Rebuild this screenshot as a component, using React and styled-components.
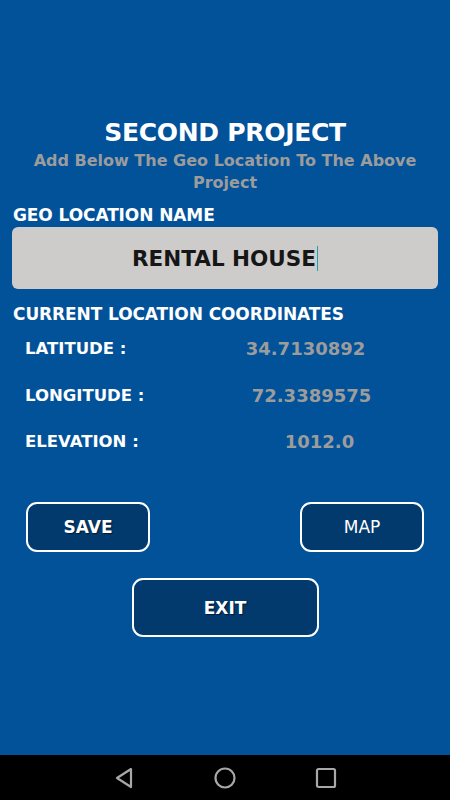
import React from "react";
import styled, { createGlobalStyle } from "styled-components";

const GlobalStyle = createGlobalStyle`
  html, body {
    margin: 0;
    padding: 0;
    background: #02529a;
  }
  body {
    font-family: "DejaVu Sans", "Liberation Sans", sans-serif;
  }
`;

const coords = [
  { label: "LATITUDE :", value: "34.7130892", shift: -21 },
  { label: "LONGITUDE :", value: "72.3389575", shift: -15 },
  { label: "ELEVATION :", value: "1012.0", shift: -7 },
];

const App = () => {
  return (
    <Screen>
      <GlobalStyle />
      <Content>
        <Title>SECOND PROJECT</Title>
        <Subtitle>Add Below The Geo Location To The Above Project</Subtitle>

        <SectionLabel top={11}>GEO LOCATION NAME</SectionLabel>
        <NameBox>
          <NameText>RENTAL HOUSE</NameText>
          <Caret />
        </NameBox>

        <SectionLabel top={15}>CURRENT LOCATION COORDINATES</SectionLabel>
        <CoordList>
          {coords.map((c) => (
            <CoordRow key={c.label}>
              <CoordLabel>{c.label}</CoordLabel>
              <CoordValue shift={c.shift}>{c.value}</CoordValue>
            </CoordRow>
          ))}
        </CoordList>

        <ButtonRow>
          <ActionButton>SAVE</ActionButton>
          <ActionButton light>MAP</ActionButton>
        </ButtonRow>
        <ExitWrap>
          <ExitButton>EXIT</ExitButton>
        </ExitWrap>
      </Content>

      <NavBar>
        <svg width="22" height="24" viewBox="0 0 22 24">
          <path d="M18 3 L4 12 L18 21 Z" fill="none" stroke="#a8a8a8" strokeWidth="2.2" strokeLinejoin="round" />
        </svg>
        <svg width="24" height="24" viewBox="0 0 24 24">
          <circle cx="12" cy="12" r="9.5" fill="none" stroke="#a8a8a8" strokeWidth="2.2" />
        </svg>
        <svg width="22" height="22" viewBox="0 0 22 22">
          <rect x="2" y="2" width="18" height="18" rx="1.5" fill="none" stroke="#a8a8a8" strokeWidth="2.2" />
        </svg>
      </NavBar>
    </Screen>
  );
};

export default App;

const Screen = styled.div`
  width: 450px;
  height: 800px;
  display: flex;
  flex-direction: column;
  background: #02529a;
  overflow: hidden;
`;

const Content = styled.div`
  flex: 1;
  display: flex;
  flex-direction: column;
  padding: 116px 12px 0;
`;

const Title = styled.div`
  color: #fff;
  font-weight: bold;
  font-size: 25px;
  letter-spacing: -0.3px;
  text-align: center;
  line-height: 34px;
`;

const Subtitle = styled.div`
  color: #9c9c9c;
  font-weight: bold;
  font-size: 16px;
  line-height: 22px;
  text-align: center;
  padding: 0 20px;
`;

const SectionLabel = styled.div`
  color: #fff;
  font-weight: bold;
  font-size: 17px;
  letter-spacing: -0.1px;
  line-height: 20px;
  margin-top: ${({ top }) => top}px;
  padding-left: 1px;
`;

const NameBox = styled.div`
  height: 62px;
  margin-top: 2px;
  background: #cdcccb;
  border-radius: 6px;
  display: flex;
  align-items: center;
  justify-content: center;
`;

const NameText = styled.span`
  color: #161616;
  font-weight: bold;
  font-size: 21.5px;
`;

const Caret = styled.span`
  width: 1px;
  height: 25px;
  background: #1aa3b5;
  margin-left: 1px;
`;

const CoordList = styled.div`
  display: flex;
  flex-direction: column;
  gap: 26.5px;
  margin-top: 15px;
`;

const CoordRow = styled.div`
  display: grid;
  grid-template-columns: 190px 1fr;
  align-items: center;
  padding-left: 13px;
  line-height: 20px;
`;

const CoordLabel = styled.div`
  color: #fff;
  font-weight: bold;
  font-size: 16.5px;
`;

const CoordValue = styled.div`
  color: #9c9c9c;
  font-weight: bold;
  font-size: 18px;
  text-align: center;
  transform: translateX(${({ shift }) => shift}px);
`;

const ButtonRow = styled.div`
  display: flex;
  justify-content: space-between;
  padding: 0 14px;
  margin-top: 50px;
`;

const ActionButton = styled.div`
  width: 124px;
  height: 50px;
  box-sizing: border-box;
  border: 2px solid #fff;
  border-radius: 11px;
  background: #033a6d;
  color: #fff;
  font-weight: ${({ light }) => (light ? "normal" : "bold")};
  font-size: 17px;
  text-shadow: ${({ light }) => (light ? "none" : "1px 1px 1px #001a33")};
  display: flex;
  align-items: center;
  justify-content: center;
`;

const ExitWrap = styled.div`
  display: flex;
  justify-content: center;
  margin-top: 26px;
`;

const ExitButton = styled(ActionButton)`
  width: 187px;
  height: 59px;
`;

const NavBar = styled.div`
  height: 45px;
  background: #000;
  display: flex;
  align-items: center;
  justify-content: center;
  gap: 78px;
`;
